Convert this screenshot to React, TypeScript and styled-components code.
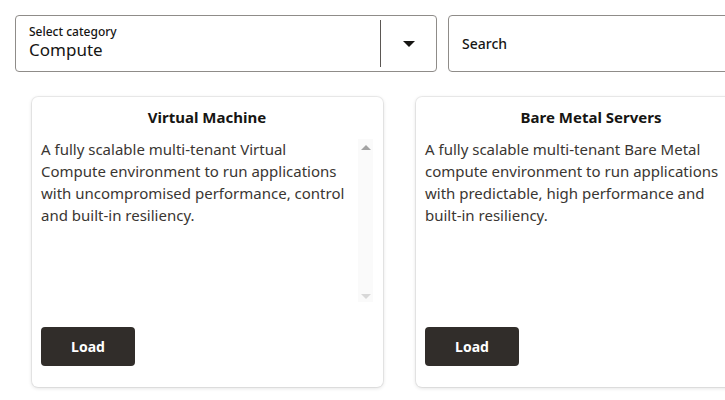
import React from "react";
import styled, { createGlobalStyle } from "styled-components";

const GlobalStyle = createGlobalStyle`
  body {
    margin: 0;
    background: #ffffff;
    font-family: "Noto Sans", "Open Sans", sans-serif;
    color: #161513;
  }
`;

const Page = styled.div`
  width: 725px;
  height: 400px;
  overflow: hidden;
  padding: 15px 0 0 15px;
  box-sizing: border-box;
`;

const Toolbar = styled.div`
  display: flex;
  gap: 11px;
  width: 800px;
`;

const SelectBox = styled.div`
  box-sizing: border-box;
  width: 422px;
  height: 57px;
  border: 1px solid #8f8c89;
  border-radius: 4px;
  display: flex;
  align-items: stretch;
`;

const SelectText = styled.div`
  flex: 1;
  display: flex;
  flex-direction: column;
  justify-content: center;
  gap: 1px;
  padding: 0 0 3px 13px;
`;

const SelectLabel = styled.span`
  font-size: 12px;
  font-weight: 500;
  line-height: 14px;
`;

const SelectValue = styled.span`
  font-size: 17px;
  line-height: 20px;
`;

const Divider = styled.div`
  width: 1px;
  background: #5b5753;
  margin: 4px 0;
`;

const ArrowCell = styled.div`
  width: 55px;
  display: flex;
  align-items: center;
  justify-content: center;
`;

const Caret = styled.div`
  width: 0;
  height: 0;
  border-left: 6px solid transparent;
  border-right: 6px solid transparent;
  border-top: 6px solid #161513;
`;

const SearchBox = styled.div`
  box-sizing: border-box;
  width: 300px;
  height: 57px;
  border: 1px solid #8f8c89;
  border-radius: 4px;
  display: flex;
  align-items: center;
  padding-left: 13px;
  font-size: 14px;
  font-weight: 500;
`;

const CardRow = styled.div`
  display: flex;
  gap: 33px;
  margin: 25px 0 0 17px;
  width: 900px;
`;

const Card = styled.div`
  box-sizing: border-box;
  width: 351px;
  height: 290px;
  border-radius: 6px;
  background: #fff;
  box-shadow: 0 0 0 1px rgba(0, 0, 0, 0.06), 0 1px 4px rgba(0, 0, 0, 0.14);
  padding: 9px 10px 21px 9px;
  display: flex;
  flex-direction: column;
`;

const CardTitle = styled.h3`
  margin: 0;
  text-align: center;
  font-size: 15px;
  font-weight: 700;
  line-height: 22px;
`;

const Body = styled.div`
  display: flex;
  margin-top: 20px;
  height: 155px;
  margin-bottom: 24px;
`;

const Description = styled.p`
  flex: 1;
  max-width: 311px;
  margin: -10px auto 0 0;
  font-size: 15px;
  line-height: 22px;
  color: #3a3632;
`;

const Track = styled.div`
  width: 15px;
  height: 163px;
  flex-shrink: 0;
  background: #fafafa;
  display: flex;
  flex-direction: column;
  justify-content: space-between;
  align-items: center;
  padding: 6px 0 3px;
  box-sizing: border-box;
  margin-top: -9px;
`;

const TrackArrow = styled.div<{ $down?: boolean; $faint?: boolean }>`
  width: 0;
  height: 0;
  border-left: 5px solid transparent;
  border-right: 5px solid transparent;
  ${(p) =>
    p.$down
      ? `border-top: 5px solid ${p.$faint ? "#d8d8d8" : "#a3a3a3"};`
      : `border-bottom: 5px solid ${p.$faint ? "#d8d8d8" : "#a3a3a3"};`}
`;

const LoadButton = styled.button`
  width: 94px;
  height: 39px;
  flex-shrink: 0;
  border: none;
  border-radius: 4px;
  background: #312d2a;
  color: #fff;
  font-family: inherit;
  font-size: 14px;
  font-weight: 700;
  cursor: pointer;
`;

const cards = [
  {
    title: "Virtual Machine",
    text: "A fully scalable multi-tenant Virtual Compute environment to run applications with uncompromised performance, control and built-in resiliency.",
    scroll: true,
  },
  {
    title: "Bare Metal Servers",
    text: "A fully scalable multi-tenant Bare Metal compute environment to run applications with predictable, high performance and built-in resiliency.",
    scroll: false,
  },
];

export default function App() {
  return (
    <Page>
      <GlobalStyle />
      <Toolbar>
        <SelectBox>
          <SelectText>
            <SelectLabel>Select category</SelectLabel>
            <SelectValue>Compute</SelectValue>
          </SelectText>
          <Divider />
          <ArrowCell>
            <Caret />
          </ArrowCell>
        </SelectBox>
        <SearchBox>Search</SearchBox>
      </Toolbar>
      <CardRow>
        {cards.map((c) => (
          <Card key={c.title}>
            <CardTitle>{c.title}</CardTitle>
            <Body>
              <Description>{c.text}</Description>
              {c.scroll && (
                <Track>
                  <TrackArrow />
                  <TrackArrow $down $faint />
                </Track>
              )}
            </Body>
            <LoadButton>Load</LoadButton>
          </Card>
        ))}
      </CardRow>
    </Page>
  );
}
